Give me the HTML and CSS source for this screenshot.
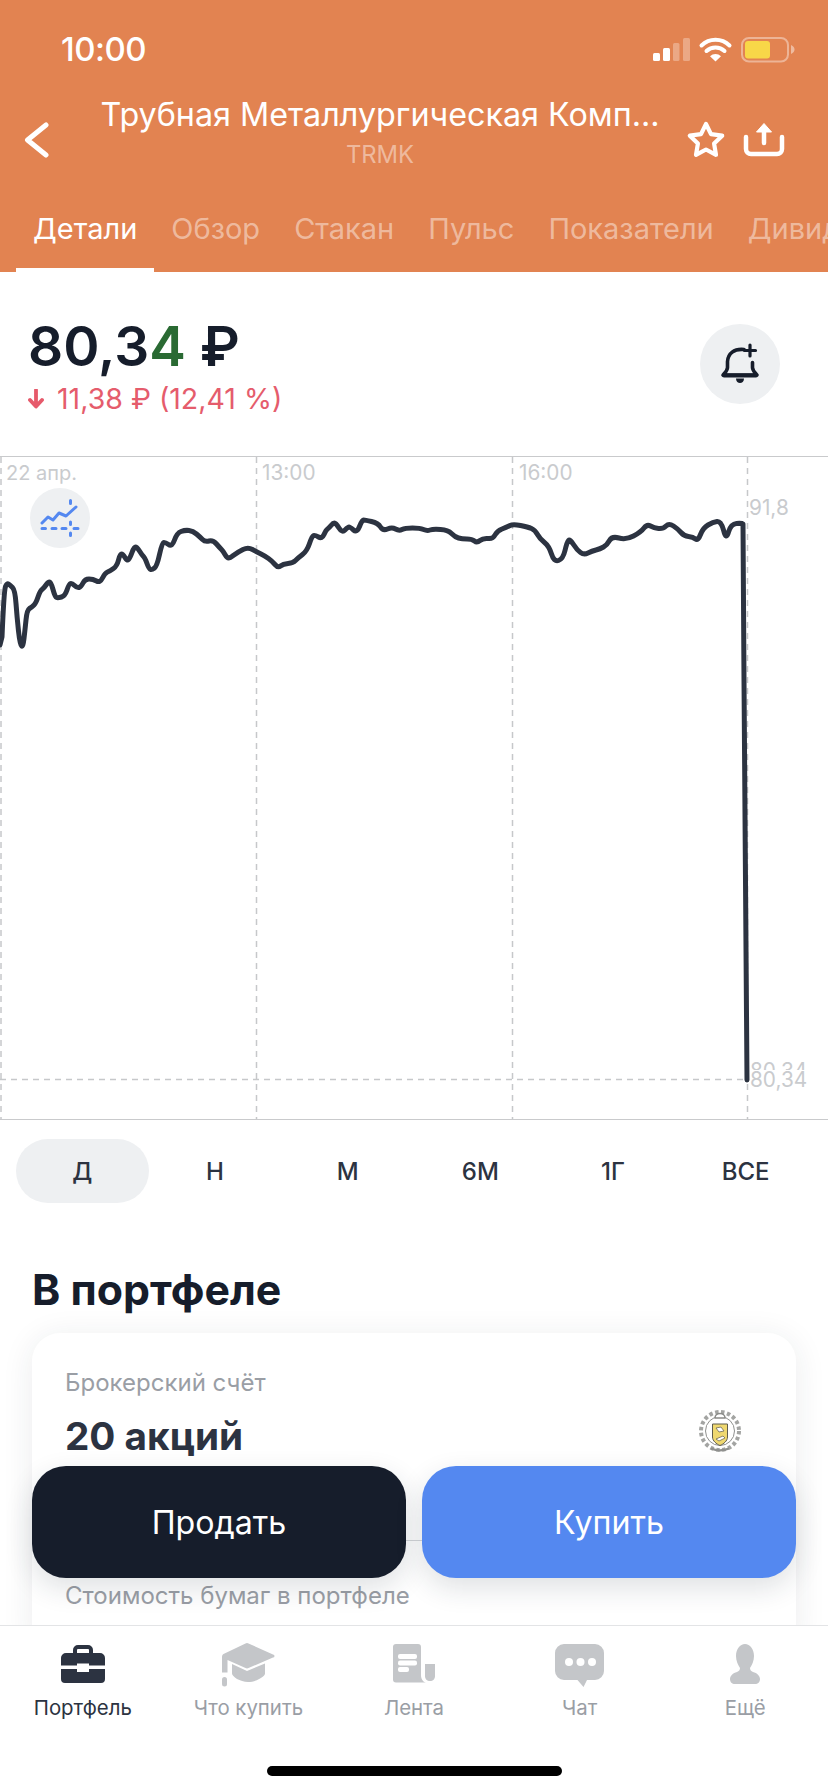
FILE: index.html
```html
<!DOCTYPE html>
<html lang="ru">
<head>
<meta charset="utf-8">
<title>TRMK</title>
<link rel="stylesheet" href="styles.css">
</head>
<body>
<div class="page">
  <header class="header">
    <div class="status">
      <span class="time">10:00</span>
      <svg class="status-icons" width="146" height="28" viewBox="650 36 146 28">
        <rect x="653" y="53" width="7" height="8" rx="1.5" fill="#fff"/>
        <rect x="663" y="48" width="7" height="13" rx="1.5" fill="#fff"/>
        <rect x="673" y="43" width="6.5" height="18" rx="1.5" fill="#fff" opacity=".3"/>
        <rect x="683" y="38" width="7" height="23" rx="1.5" fill="#fff" opacity=".3"/>
        <path d="M701.5 45.5a20 20 0 0 1 28 0" fill="none" stroke="#fff" stroke-width="4" stroke-linecap="round"/>
        <path d="M706.5 51a13 13 0 0 1 18 0" fill="none" stroke="#fff" stroke-width="4" stroke-linecap="round"/>
        <path d="M710 56.2a8 8 0 0 1 11 0l-5.500 5.300z" fill="#fff"/>
        <rect x="742" y="38" width="46" height="23.500" rx="7" fill="none" stroke="#fff" stroke-opacity=".4" stroke-width="2"/>
        <rect x="745" y="41" width="25" height="17.500" rx="3" fill="#f8d748"/>
        <path d="M791 45c2.500 1 3.500 3 3.500 4.500s-1 3.500-3.500 4.500z" fill="#fff" opacity=".45"/>
      </svg>
    </div>
    <div class="nav">
      <div class="nav-left">
        <svg width="26" height="36" viewBox="0 0 26 36"><path d="M22 3 3.500 18 22 33" fill="none" stroke="#fff" stroke-width="5" stroke-linecap="round" stroke-linejoin="round"/></svg>
      </div>
      <div class="nav-title">
        <div class="title">Трубная Металлургическая Комп...</div>
        <div class="ticker">TRMK</div>
      </div>
      <div class="nav-actions">
        <svg width="108" height="44" viewBox="685 118 108 44">
          <path d="M706 124l5 10.100 11.200 1.600-8.100 7.900 1.900 11.200-10-5.300-10 5.300 1.900-11.200-8.100-7.900 11.200-1.600z" fill="none" stroke="#fff" stroke-width="4.200" stroke-linejoin="round"/>
          <path d="M746 137v12a5 5 0 0 0 5 5h26a5 5 0 0 0 5-5v-12" fill="none" stroke="#fff" stroke-width="4.500" stroke-linecap="round"/>
          <path d="M764 130v13" fill="none" stroke="#fff" stroke-width="4.500" stroke-linecap="round"/>
          <path d="M764 123.500l7.500 8.500h-15z" fill="#fff" stroke="#fff" stroke-width="1" stroke-linejoin="round"/>
        </svg>
      </div>
    </div>
    <nav class="tabs">
      <span class="tab tab-active">Детали</span>
      <span class="tab">Обзор</span>
      <span class="tab">Стакан</span>
      <span class="tab">Пульс</span>
      <span class="tab">Показатели</span>
      <span class="tab">Дивиденды</span>
    </nav>
  </header>

  <main class="main">
    <section class="quote">
      <div>
        <div class="price">80,3<span class="price-last">4</span> ₽</div>
        <div class="delta">
          <svg width="16" height="20" viewBox="0 0 16 20"><path d="M8 1v16M2 11l6 6.500 6-6.500" fill="none" stroke="#e65a6b" stroke-width="3.800" stroke-linecap="round" stroke-linejoin="round"/></svg>
          <span>11,38 ₽ (12,41 %)</span>
        </div>
      </div>
      <button class="bell" type="button" aria-label="Уведомление">
        <svg width="44" height="44" viewBox="718 342 44 44">
          <path d="M744 349.500c-10-1-16 4-16.500 12v6c0 3-2.500 5-4.500 7.500h34c-2-2.500-4.500-4.500-4.500-7.500v-5" fill="none" stroke="#161d2b" stroke-width="3.600" stroke-linecap="round" stroke-linejoin="round"/>
          <path d="M724 375.500h32" stroke="#161d2b" stroke-width="4" stroke-linecap="round"/>
          <path d="M736 378.500h8c0 3-2 4.500-4 4.500s-4-1.500-4-4.500z" fill="#161d2b"/>
          <path d="M750 345v11M744.500 350.500h11" stroke="#161d2b" stroke-width="3.200" stroke-linecap="round"/>
        </svg>
      </button>
    </section>

    <section class="chart">
      <svg class="chart-plot" width="828" height="662" viewBox="0 457 828 662">
        <g fill="none" stroke="#c6c8ca" stroke-width="1.500" stroke-dasharray="6 5">
          <path d="M1 457v662M256.500 457v662M512.500 457v662M747.500 457v662M0 1079.500h747"/>
        </g>
        <path class="chart-line" d="M0 645L2 637Q4 590 5.500 586.500Q7 583 8.500 584Q10 585 12.500 587.500Q15 590 16 603.500Q17 617 18.500 631Q20 645 21.500 646Q23 647 24 638.500Q25 630 26 620Q27 610 29.500 608.500Q32 607 34 605Q36 603 38 597Q40 591 42 589.500Q44 588 46 585Q48 582 49.500 582Q51 582 53 589.500Q55 597 56.500 597.500Q58 598 61.500 597Q65 596 67 590Q69 584 70.500 583.500Q72 583 74.500 585.500Q77 588 79 587.500Q81 587 83 583Q85 579 89 579Q93 579 96.500 581Q100 583 102.500 578Q105 573 107.500 572Q110 571 113.500 568.500Q117 566 118.500 560Q120 554 121.500 554Q123 554 125 557.500Q127 561 128.500 559.500Q130 558 132 552.500Q134 547 135.500 547Q137 547 139.500 551Q142 555 143.500 556.500Q145 558 147 563.500Q149 569 150.500 569.500Q152 570 154.500 568Q157 566 159.500 554.500Q162 543 163.500 542.500Q165 542 168.500 544.500Q172 547 174.500 540Q177 533 181 531.500Q185 530 189 530.500Q193 531 196.500 534Q200 537 202.500 539.500Q205 542 209 541Q213 540 216.500 544Q220 548 221.500 549.500Q223 551 225 554.500Q227 558 228.500 558Q230 558 234 555Q238 552 243 549.500Q248 547 252.500 549.500Q257 552 261 554Q265 556 268.500 558.500Q272 561 275 564.500Q278 568 280.500 566Q283 564 288 563.500Q293 563 295.500 560.500Q298 558 302.500 554.500Q307 551 309.500 543.500Q312 536 313.500 535.500Q315 535 318.500 537Q322 539 324 534.500Q326 530 327.500 529Q329 528 331 525.500Q333 523 334.500 523Q336 523 339 528Q342 533 345 530Q348 527 349 527Q350 527 353.500 530Q357 533 359.500 526.500Q362 520 363.500 520Q365 520 371.500 521.500Q378 523 380.500 527Q383 531 387.500 529Q392 527 395.500 529Q399 531 402 529.500Q405 528 412.500 528Q420 528 423.500 529.500Q427 531 430 530Q433 529 440.500 529.500Q448 530 451.500 533.500Q455 537 458.500 538Q462 539 467 539Q472 539 474.500 541Q477 543 480 540.500Q483 538 488 538.500Q493 539 495 535Q497 531 502 529Q507 527 510 525.500Q513 524 520.500 525.500Q528 527 531.500 528.500Q535 530 537.500 534.500Q540 539 544.500 542.500Q549 546 551.500 554Q554 562 558.500 560.500Q563 559 565 550.500Q567 542 568.500 540.500Q570 539 573.500 544.500Q577 550 580.500 552.500Q584 555 588 553Q592 551 596 550Q600 549 603.500 547Q607 545 609.500 540.500Q612 536 619 538Q626 540 633.500 536Q641 532 644 528Q647 524 650.500 526Q654 528 658.500 528.500Q663 529 666 526Q669 523 673.500 526Q678 529 681 532.500Q684 536 688.500 536.500Q693 537 695.500 539Q698 541 700.500 534.500Q703 528 708 525Q713 522 717 521.500Q721 521 723.500 530Q726 541 728.500 532Q731 524 736.500 523.500Q742 523 743 524L744 680L747 1080"/>
      </svg>
      <span class="axis axis-a">22 апр.</span>
      <span class="axis axis-b">13:00</span>
      <span class="axis axis-c">16:00</span>
      <span class="axis axis-max">91,8</span>
      <span class="axis axis-clip">80,34</span>
      <span class="axis axis-min">80,34</span>
      <div class="chart-mode">
        <svg width="60" height="60" viewBox="30 488 60 60">
          <path d="M42 523l6-6 5 3 6-7 7 3 10-9" fill="none" stroke="#5488f0" stroke-width="3" stroke-linecap="round" stroke-linejoin="round"/>
          <path d="M42 528.500h3.500M52 528.500h4M62 528.500h4M74 528.500h4M70.500 500.500v3M70.500 522v2.500M70.500 533v2.500" stroke="#5488f0" stroke-width="3" stroke-linecap="round"/>
        </svg>
      </div>
    </section>

    <div class="periods">
      <span class="period period-active">Д</span>
      <span class="period">Н</span>
      <span class="period">М</span>
      <span class="period">6М</span>
      <span class="period">1Г</span>
      <span class="period">ВСЕ</span>
    </div>

    <h2 class="section-title">В портфеле</h2>

    <section class="card">
      <div class="card-label">Брокерский счёт</div>
      <div class="card-row">
        <div class="card-value">20 акций</div>
        <svg class="bank-logo" width="48" height="44" viewBox="696 1408 48 44">
          <circle cx="720" cy="1431" r="19" fill="none" stroke="#a3a4a2" stroke-width="4" stroke-dasharray="3.500 2.500"/>
          <circle cx="720" cy="1431" r="14.500" fill="#fff" stroke="#8f908e" stroke-width="1"/>
          <path d="M715 1418c0-6 10-6 10 0z" fill="#fff" stroke="#8a8b88" stroke-width="1.500"/>
          <path d="M712.500 1424h15v13c0 4-4 7-7.500 8.500-3.500-1.500-7.500-4.500-7.500-8.500z" fill="#efd870" stroke="#5f5c4d" stroke-width="1"/>
          <path d="M716 1428l5-1 3 4-5 1zM716 1439l7-3 2 2-6 3z" fill="#fff" stroke="#6f6b55" stroke-width=".8"/>
          <path d="M711 1448.500c6 2.500 12 2.500 18 0" fill="none" stroke="#8f908e" stroke-width="2"/>
        </svg>
      </div>
      <div class="card-divider"></div>
      <div class="card-label card-label-next">Стоимость бумаг в портфеле</div>
    </section>

    <div class="actions">
      <button class="action action-sell" type="button">Продать</button>
      <button class="action action-buy" type="button">Купить</button>
    </div>
  </main>

  <footer class="tabbar">
    <div class="tabbar-row">
      <div class="tabbar-item tabbar-item-active">
        <svg width="60" height="46" viewBox="52 1642 60 46">
          <path d="M74 1654v-4a3 3 0 0 1 3-3h10a3 3 0 0 1 3 3v4" fill="none" stroke="#2c3341" stroke-width="4"/>
          <path d="M60 1658a5 5 0 0 1 5-5h34a5 5 0 0 1 5 5v7.500H88v-2h-12v2H60z" fill="#2c3341"/>
          <path d="M60 1669h16v3h12v-3h16v10a4 4 0 0 1-4 4H64a4 4 0 0 1-4-4z" fill="#2c3341"/>
        </svg>
        <span>Портфель</span>
      </div>
      <div class="tabbar-item">
        <svg width="60" height="46" viewBox="219 1642 60 46">
          <path d="M246.500 1643.500a3 3 0 0 1 3 0l24.500 11a1.500 1.500 0 0 1 0 3l-24.500 10.500a3 3 0 0 1-3 0l-18-8v12.500h-5.500v-15.500c0-1.500.5-2.500 1.500-3z" fill="#c4c6c9"/>
          <path d="M233 1664l15 7 18-7.500v10c0 3-9 8.500-17 8.500s-16-5.500-16-8.500z" fill="#c4c6c9"/>
          <rect x="223" y="1677" width="5" height="9.500" rx="2.500" fill="#c4c6c9"/>
        </svg>
        <span>Что купить</span>
      </div>
      <div class="tabbar-item">
        <svg width="60" height="46" viewBox="384 1642 60 46">
          <path d="M396 1644h22a3 3 0 0 1 3 3v28c0 4 2 7 5 7.500H396a3 3 0 0 1-3-3V1647a3 3 0 0 1 3-3z" fill="#c4c6c9"/>
          <path d="M425 1664h10v12c0 3-2 5-5 5s-5-2-5-5z" fill="#c4c6c9"/>
          <rect x="398" y="1654" width="19" height="5" rx="2" fill="#fff"/>
          <rect x="398" y="1660.500" width="19" height="5" rx="2" fill="#fff"/>
          <rect x="398" y="1667" width="11" height="5" rx="2" fill="#fff"/>
        </svg>
        <span>Лента</span>
      </div>
      <div class="tabbar-item">
        <svg width="60" height="46" viewBox="549 1642 60 46">
          <path d="M563 1644h31a9 9 0 0 1 9 9v18a9 9 0 0 1-9 9h-8l-3.500 7-6-7H563a9 9 0 0 1-9-9v-18a9 9 0 0 1 9-9z" fill="#c4c6c9"/>
          <circle cx="568" cy="1662" r="4" fill="#fff"/>
          <circle cx="579.500" cy="1662" r="4" fill="#fff"/>
          <circle cx="591" cy="1662" r="4" fill="#fff"/>
        </svg>
        <span>Чат</span>
      </div>
      <div class="tabbar-item">
        <svg width="60" height="46" viewBox="715 1642 60 46">
          <path d="M745 1644c5 0 9 5 9 12 0 5-2 9-4 12 0 2 1 3 3 4 4 1 7 4 7 7 0 3-2 5-5 5h-20c-3 0-5-2-5-5 0-3 3-6 7-7 2-1 3-2 3-4-2-3-4-7-4-12 0-7 4-12 9-12z" fill="#c4c6c9"/>
        </svg>
        <span>Ещё</span>
      </div>
    </div>
    <div class="home-indicator"></div>
  </footer>
</div>
</body>
</html>
```

FILE: styles.css
```css
* { box-sizing: border-box; }

html, body {
  margin: 0;
  padding: 0;
  background: #fff;
}

body {
  font-family: Inter, "Noto Sans", "Liberation Sans", sans-serif;
  color: #161d2b;
}

.page {
  width: 828px;
  height: 1792px;
  display: flex;
  flex-direction: column;
  overflow: hidden;
  background: #fff;
}

/* Header */
.header {
  flex: none;
  height: 272px;
  background: #e28351;
  color: #fff;
}

.status {
  height: 92px;
  padding: 6px 32px 0 61px;
  display: flex;
  align-items: center;
  justify-content: space-between;
}

.time {
  font-size: 33px;
  font-weight: 500;
  letter-spacing: -0.5px;
}

.status-icons { display: block; margin-top: 2px; }

.nav {
  height: 79px;
  display: flex;
}

.nav-left {
  flex: none;
  width: 84px;
  padding: 30px 0 0 24px;
}

.nav-left svg { display: block; }

.nav-title {
  flex: none;
  width: 592px;
  padding-top: 1px;
  text-align: center;
}

.title {
  font-size: 32.3px;
  line-height: 44px;
  white-space: nowrap;
}

.ticker {
  margin-top: 1px;
  font-size: 23.8px;
  line-height: 34px;
  color: rgba(255, 255, 255, .45);
}

.nav-actions {
  flex: none;
  padding: 26px 0 0 9px;
}

.nav-actions svg { display: block; }

.tabs {
  height: 101px;
  display: flex;
  overflow: hidden;
  padding-left: 16px;
  white-space: nowrap;
}

.tab {
  flex: none;
  height: 101px;
  padding: 38px 17px 19px;
  font-size: 29px;
  line-height: 40px;
  color: rgba(255, 255, 255, .45);
  border-bottom: 4px solid transparent;
}

.tab-active {
  color: #fff;
  border-bottom-color: #fff;
}

/* Main */
.main {
  position: relative;
  flex: 1;
  min-height: 0;
  overflow: hidden;
}

.quote {
  height: 184px;
  padding: 44px 48px 0 28px;
  display: flex;
  justify-content: space-between;
}

.price {
  font-size: 55px;
  line-height: 60px;
  font-weight: 600;
  color: #161d2b;
  white-space: nowrap;
}

.price-last { color: #2a6a33; }

.delta {
  margin-top: 7px;
  display: flex;
  align-items: center;
  gap: 13px;
  font-size: 28.5px;
  line-height: 32px;
  color: #e55c6c;
}

.delta svg { display: block; flex: none; }

.bell {
  flex: none;
  width: 80px;
  height: 80px;
  margin-top: 8px;
  padding: 0;
  border: 0;
  border-radius: 50%;
  background: #eef0f2;
  display: flex;
  align-items: center;
  justify-content: center;
}

.bell svg { display: block; }

/* Chart */
.chart {
  position: relative;
  height: 664px;
  border-top: 1px solid #c9cacc;
  border-bottom: 1px solid #c9cacc;
}

.chart-plot {
  display: block;
}

.chart-line {
  fill: none;
  stroke: #2c3341;
  stroke-width: 5;
  stroke-linejoin: round;
  stroke-linecap: round;
}

.axis {
  position: absolute;
  font-size: 20.8px;
  line-height: 24px;
  color: #c9cbce;
  background: transparent;
  white-space: nowrap;
}

.axis-a { left: 6px; top: 4px; font-size: 20px; }
.axis-b { left: 262px; top: 4px; }
.axis-c { left: 519px; top: 4px; }
.axis-max { left: 749px; top: 39px; }
.axis-min { left: 750px; top: 611px; }

.axis-clip {
  left: 750px;
  top: 602px;
  height: 11px;
  overflow: hidden;
}

.chart-mode {
  position: absolute;
  left: 30px;
  top: 31px;
  width: 60px;
  height: 60px;
  border-radius: 50%;
  background: #eef0f2;
}

.chart-mode svg { display: block; }

/* Periods */
.periods {
  margin-top: 19px;
  height: 64px;
  padding: 0 16px;
  display: grid;
  grid-template-columns: repeat(6, 1fr);
}

.period {
  display: flex;
  align-items: center;
  justify-content: center;
  font-size: 24px;
  font-weight: 500;
  color: #2c3341;
  border-radius: 32px;
}

.period-active { background: #eef0f2; }

/* Portfolio */
.section-title {
  margin: 62px 0 0;
  padding-left: 32px;
  font-size: 42.8px;
  line-height: 50px;
  font-weight: 700;
  color: #161d2b;
}

.card {
  margin: 18px 32px 0;
  height: 320px;
  padding: 35px 33px 0;
  border-radius: 28px;
  background: #fff;
  box-shadow: 0 4px 32px rgba(30, 40, 60, .09);
}

.card-label {
  font-size: 24px;
  line-height: 30px;
  color: #9a9ea5;
}

.card-label-next { margin-top: 40px; }

.card-row {
  margin-top: 13px;
  display: flex;
  justify-content: space-between;
  align-items: flex-start;
}

.card-value {
  font-size: 38.7px;
  line-height: 50px;
  font-weight: 700;
  color: #2c3341;
}

.bank-logo {
  display: block;
  margin: -3px 19px 0 0;
}

.card-divider {
  margin: 79px -33px 0 -33px;
  height: 1px;
  background: #d5d7da;
}

.actions {
  position: absolute;
  left: 32px;
  right: 32px;
  bottom: 47px;
  display: flex;
  gap: 16px;
}

.action {
  flex: 1;
  height: 112px;
  padding: 0;
  border: 0;
  border-radius: 34px;
  font-family: inherit;
  font-size: 32.2px;
  color: #fff;
  box-shadow: 0 10px 28px rgba(30, 40, 60, .14);
}

.action-sell { background: #161d2b; }
.action-buy { background: #5488f0; }

/* Tab bar */
.tabbar {
  flex: none;
  height: 167px;
  border-top: 1px solid #e3e4e6;
  background: #fff;
  display: flex;
  flex-direction: column;
  align-items: center;
}

.tabbar-row {
  align-self: stretch;
  display: grid;
  grid-template-columns: repeat(5, 1fr);
  padding-top: 16px;
}

.tabbar-item {
  display: flex;
  flex-direction: column;
  align-items: center;
  font-size: 20.4px;
  line-height: 24px;
  color: #9a9ea5;
}

.tabbar-item svg { display: block; margin-bottom: 8px; }

.tabbar-item-active { color: #2c3341; }

.home-indicator {
  margin-top: 46px;
  width: 295px;
  height: 10px;
  border-radius: 5px;
  background: #000;
}
```
